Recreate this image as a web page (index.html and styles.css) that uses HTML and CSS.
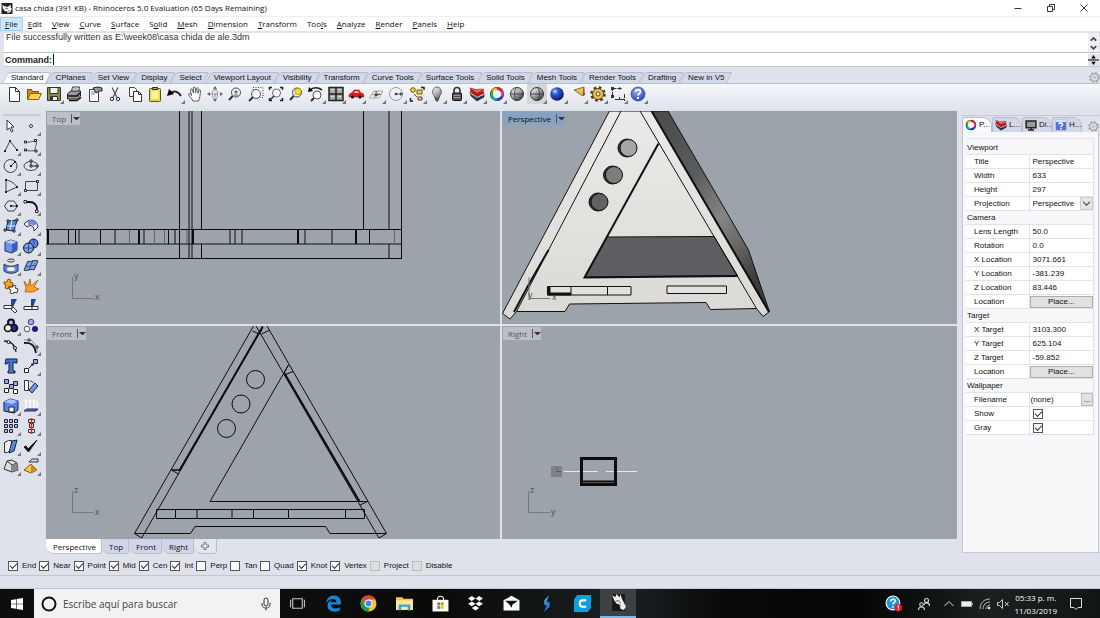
FILE: index.html
```html
<!DOCTYPE html>
<html lang="en">
<head>
<meta charset="utf-8">
<title>casa chida - Rhinoceros 5.0</title>
<link rel="stylesheet" href="styles.css">
</head>
<body>
<svg class="defs" aria-hidden="true">
  <defs>
    <linearGradient id="ball" x1="0" y1="0" x2="0.8" y2="1"><stop offset="0" stop-color="#fff"/><stop offset="0.5" stop-color="#aaa"/><stop offset="1" stop-color="#333"/></linearGradient>
    <radialGradient id="blueball" cx="0.35" cy="0.3" r="0.75"><stop offset="0" stop-color="#cfe0ff"/><stop offset="0.3" stop-color="#2f5fd8"/><stop offset="1" stop-color="#04136a"/></radialGradient>
    <radialGradient id="helpball" cx="0.4" cy="0.3" r="0.8"><stop offset="0" stop-color="#8fa8f4"/><stop offset="1" stop-color="#2440b8"/></radialGradient>
    <linearGradient id="side" x1="0" y1="0" x2="0.6" y2="1"><stop offset="0" stop-color="#48494b"/><stop offset="0.4" stop-color="#5b5c5e"/><stop offset="0.65" stop-color="#858585"/><stop offset="0.8" stop-color="#6c6a67"/><stop offset="1" stop-color="#3c3c3c"/></linearGradient>
    <linearGradient id="face" x1="0" y1="0" x2="0" y2="1"><stop offset="0" stop-color="#ebeae8"/><stop offset="1" stop-color="#dad9d6"/></linearGradient>
    <symbol id="wheel" viewBox="0 0 16 16"><circle cx="8" cy="8" r="7" fill="#222"/><g fill="none" stroke-width="3"><path stroke="#e22" d="M8 3a5 5 0 0 1 4.300 2.500"/><path stroke="#e3c" d="M12.300 5.500a5 5 0 0 1 0 5"/><path stroke="#33d" d="M12.300 10.500a5 5 0 0 1-4.300 2.500"/><path stroke="#0bc" d="M8 13a5 5 0 0 1-4.300-2.500"/><path stroke="#2b3" d="M3.700 10.500a5 5 0 0 1 0-5"/><path stroke="#eb1" d="M3.700 5.500a5 5 0 0 1 4.300-2.500"/></g><circle cx="8" cy="8" r="4" fill="#fff"/></symbol>
    <symbol id="layers" viewBox="0 0 16 16"><path fill="#24345f" stroke="#111" stroke-width=".6" d="M1 6l1 4 6 5 7-4V8l-7 3z"/><path fill="#f4f4f4" stroke="#333" stroke-width=".5" d="M1 4.500l.500 3.500 6.500 4 7-3V7l-7 3z"/><path fill="#c01818" d="M1 2l7 5 6.500-3 .500 3.500-7 3.500-6-4z"/><path fill="#f4704a" stroke="#511" stroke-width=".5" d="M1 2l6 1.500L14.500 3v1L8 7z"/></symbol>
    <symbol id="cog" viewBox="0 0 16 16"><circle cx="8" cy="8" r="5.500" fill="none" stroke="#999" stroke-width="1.600"/><circle cx="8" cy="8" r="7" fill="none" stroke="#999" stroke-width="1.600" stroke-dasharray="2.750 2.750"/><circle cx="8" cy="8" r="1.700" fill="none" stroke="#999"/></symbol>
    <symbol id="rhino" viewBox="0 0 16 16"><rect width="16" height="16" fill="#222"/><path fill="#fff" d="M1 2l3 3 2-1 1 2 3-1 4-3-1 4 2 2-2 5-4 2-1-3-3 0-3-4z"/><path d="M5 7l3 2 2-2M9 12l3-1" stroke="#222" fill="none"/></symbol>
    <symbol id="lens" viewBox="0 0 16 16"><circle cx="9" cy="6.500" r="4.500" fill="#f7f7f7" fill-opacity=".7" stroke="#444"/><path d="M5.700 10L2 14" stroke="#333" stroke-width="2"/></symbol>
  </defs>
</svg>

<header class="titlebar">
  <svg class="app-icon"><use href="#rhino"/></svg>
  <h1 class="title">casa chida (391 KB) - Rhinoceros 5.0 Evaluation (65 Days Remaining)</h1>
  <div class="window-buttons">
    <button aria-label="Minimize"><svg viewBox="0 0 10 10"><path d="M1.500 5.500h7"/></svg></button>
    <button aria-label="Restore"><svg viewBox="0 0 10 10"><path d="M1.500 3.500h5v5h-5zM3.500 3.500v-2h5v5h-2"/></svg></button>
    <button aria-label="Close"><svg viewBox="0 0 10 10"><path d="M1.500 1.500l7 7M8.500 1.500l-7 7"/></svg></button>
  </div>
</header>

<nav class="menubar">
  <button class="open"><u>F</u>ile</button><button><u>E</u>dit</button><button><u>V</u>iew</button><button><u>C</u>urve</button><button><u>S</u>urface</button><button>S<u>o</u>lid</button><button><u>M</u>esh</button><button><u>D</u>imension</button><button><u>T</u>ransform</button><button>Too<u>l</u>s</button><button><u>A</u>nalyze</button><button><u>R</u>ender</button><button><u>P</u>anels</button><button><u>H</u>elp</button>
</nav>

<section class="command">
  <div class="history">
    <p>File successfully written as E:\week08\casa chida de ale.3dm</p>
    <div class="scroller"><svg viewBox="0 0 10 18"><path d="M2.500 7L5 4.500 7.500 7M2.500 12L5 14.500 7.500 12"/></svg></div>
  </div>
  <div class="prompt">
    <label for="cmd">Command:</label><span class="caret"></span><input id="cmd" type="text">
    <div class="spinner"><svg viewBox="0 0 10 11"><path d="M5 1l2 3H3zM5 10l2-3H3zM0 5h10v1H0z"/></svg></div>
  </div>
</section>

<section class="tabstrip">
  <button class="active">Standard</button><button>CPlanes</button><button>Set View</button><button>Display</button><button>Select</button><button>Viewport Layout</button><button>Visibility</button><button>Transform</button><button>Curve Tools</button><button>Surface Tools</button><button>Solid Tools</button><button>Mesh Tools</button><button>Render Tools</button><button>Drafting</button><button>New in V5</button>
  <svg class="cog"><use href="#cog"/></svg>
</section>

<section class="toolbar">
  <div class="tools">
    <button aria-label="New"><svg viewBox="0 0 16 16"><path fill="#fff" stroke="#333" d="M3.500 1.500h6l4 4v10h-10zM9.500 1.500v4h4"/></svg></button>
    <button aria-label="Open"><svg viewBox="0 0 16 16"><path fill="#c98f12" stroke="#7a5200" d="M1.500 13.500v-10h4l1 2h6v3"/><path fill="#ffd257" stroke="#8a6000" d="M1.500 13.500l3-6h11l-3 6z"/></svg></button>
    <button class="more" aria-label="Save"><svg viewBox="0 0 16 16"><path fill="#8b8f40" stroke="#333" d="M1.500 1.500h13v13h-13z"/><path fill="#f4f4f4" stroke="#333" d="M4 1.500h8v6H4zM4.500 10.500h7v4h-7z"/><path d="M6 11v3" stroke="#333" stroke-width="2"/></svg></button>
    <button aria-label="Print"><svg viewBox="0 0 16 16"><path fill="#fff" stroke="#333" d="M5.500 6l1-5h7l-1 5"/><path fill="#999" stroke="#222" d="M1.500 8l3-3h10v5l-3 3h-10z"/><path d="M2 10h9l3-3M3 14.500h8l4-3" stroke="#111" fill="none" stroke-width="1.500"/><path d="M7.500 3h4" stroke="#777"/></svg></button>
    <button aria-label="Document properties"><svg viewBox="0 0 16 16"><path fill="#fff" stroke="#444" d="M2.500 3.500h9v12h-9z"/><path d="M4 6h5M4 8h4" stroke="#888"/><path fill="#999" stroke="#222" d="M6 2l5-1 4 1v3h-3l-3 2z"/></svg></button>
    <button aria-label="Cut"><svg viewBox="0 0 16 16"><path d="M5 1.500l5 10M11 1.500l-5 10" stroke="#555" stroke-width="1.300"/><circle cx="5" cy="13" r="1.700" fill="none" stroke="#333"/><circle cx="11" cy="13" r="1.700" fill="none" stroke="#333"/></svg></button>
    <button aria-label="Copy"><svg viewBox="0 0 16 16"><path fill="#fff" stroke="#444" d="M2.500 1.500h5l2 2v7h-7z"/><path fill="#fff" stroke="#333" d="M6.500 5.500h5l3 3v7h-8zM11.500 5.500v3h3"/></svg></button>
    <button aria-label="Paste"><svg viewBox="0 0 16 16"><rect x="2.500" y="2.500" width="11" height="13" rx="1" fill="#efd848" stroke="#5d5210"/><path d="M4.500 5h7v8h-7z" fill="#fff0a0"/><path fill="#aaa" stroke="#333" d="M5.500 1.500h5v2h-5z"/></svg></button>
    <button class="more" aria-label="Undo"><svg viewBox="0 0 16 16"><path d="M3 8c3-4 8-3 11 2" fill="none" stroke="#222" stroke-width="2"/><path d="M0 10l2-7 5 5z"/></svg></button>
    <button aria-label="Pan"><svg viewBox="0 0 16 16"><path d="M6 15c-1-3-4-4-4.500-7 1-1 2 0 3 1.500L3.500 4c0-1.500 1.500-1.500 2 0l1 3-.3-5c.3-1.300 1.800-1.200 2 0l.5 4.500.8-4c.4-1.200 1.800-.8 1.700.3l-.3 4.500 1-3c.6-1 1.800-.5 1.600.6C13 9 13 12 11.500 15z" fill="#fff" stroke="#333" stroke-width=".8"/></svg></button>
    <button aria-label="Rotate view"><svg viewBox="0 0 16 16"><path d="M8 1v14M1 8h14" stroke="#888" stroke-dasharray="4 2"/><path d="M8 0l2 3H6zM8 16l2-3H6zM0 8l3-2v4zM16 8l-3-2v4z" fill="#666"/><ellipse cx="8" cy="8" rx="2.500" ry="5" fill="none" stroke="#999"/></svg></button>
    <button aria-label="Zoom dynamic"><svg viewBox="0 0 16 16"><use href="#lens"/><path d="M7 6h4M9 4v4M7 9h4" stroke="#333" stroke-width=".8"/></svg></button>
    <button aria-label="Zoom window"><svg viewBox="0 0 16 16"><path d="M5 1.500h10v10H5z" fill="none" stroke="#444" stroke-dasharray="1 1.500"/><circle cx="8" cy="8" r="4.500" fill="#fff" fill-opacity=".7" stroke="#555"/><path d="M5 11l-4 4" stroke="#333" stroke-width="2"/></svg></button>
    <button aria-label="Zoom extents"><svg viewBox="0 0 16 16"><path d="M1.500 4V1.500H4M12 1.500h2.500V4M14.500 12v2.500H12M4 14.500H1.500V12" fill="none" stroke="#222" stroke-width="1.500"/><circle cx="8.500" cy="7" r="4" fill="#fff" stroke="#666"/><path d="M6 10l-4 4" stroke="#333" stroke-width="1.600"/></svg></button>
    <button aria-label="Zoom selected"><svg viewBox="0 0 16 16"><use href="#lens"/><circle cx="10" cy="5.500" r="3.200" fill="#ffdf28" stroke="#8b7a00" stroke-width=".6"/></svg></button>
    <button class="more" aria-label="Undo view change"><svg viewBox="0 0 16 16"><circle cx="9" cy="9" r="4" fill="#fff" stroke="#555"/><path d="M6 12l-3 3" stroke="#333" stroke-width="2"/><path d="M2 4c3-3 8-3 12 0" fill="none" stroke="#222" stroke-width="1.700"/><path d="M0 6l1-5 4 4z"/></svg></button>
    <button class="more" aria-label="Four viewports"><svg viewBox="0 0 16 16"><path d="M1 1.500h14v13H1z" fill="#aaa" stroke="#222" stroke-width="1.500"/><path d="M8 1v14M1 8h14" stroke="#222" stroke-width="1.500"/><path d="M3 3h3v1H3zM10 3h3v1h-3zM3 10h3v1H3zM10 10h3v1h-3z" fill="#ddd"/></svg></button>
    <button class="more" aria-label="Right view"><svg viewBox="0 0 16 16"><path d="M1 10c0-2 1-3 3-3l2-3h5l2 3c2 0 3 1 3 3v1H1z" fill="#e01c1c" stroke="#7c0707" stroke-width=".5"/><path d="M6 7l1-2h3l1 2z" fill="#fbb"/><circle cx="4.500" cy="11" r="1.500"/><circle cx="12" cy="11" r="1.500"/></svg></button>
    <button class="more" aria-label="Set CPlane"><svg viewBox="0 0 16 16"><path d="M1 12l5-7h9l-4 7zM3.500 8.500h10M6 12l4-7" fill="#eee" stroke="#aaa"/><path d="M8 9l4-1" stroke="#a33" stroke-width="1.500"/><path d="M8 9V5" stroke="#373"/><circle cx="8" cy="9" r="1.500" fill="#444"/></svg></button>
    <button class="more" aria-label="Object snap"><svg viewBox="0 0 16 16"><circle cx="8" cy="8" r="6.500" fill="none" stroke="#999"/><path d="M8 8h7" stroke="#555"/><circle cx="8" cy="8" r="1.300" fill="#444"/><path d="M12 6l3 2-3 2z" fill="#555"/></svg></button>
    <button class="more" aria-label="Select all"><svg viewBox="0 0 16 16"><path d="M12 1.500h3V4M1.500 12v3H4" fill="none" stroke="#222" stroke-width="1.500"/><circle cx="4" cy="4" r="2.300" fill="#f5d43a" stroke="#6b5800"/><path d="M8 4h5v4H8z" fill="#f5d43a" stroke="#6b5800"/><path d="M5 8l3 3M9 11h4v3H9z" fill="#eca" stroke="#633"/></svg></button>
    <button class="more" aria-label="Hide objects"><svg viewBox="0 0 16 16"><path d="M5.500 10c-4-4-1-9 2.500-9s6.500 5 2.500 9v2h-5z" fill="url(#ball)" fill-opacity=".7" stroke="#666"/><path d="M6 12h4v2l-2 2-2-2z" fill="#555"/></svg></button>
    <button class="more" aria-label="Lock objects"><svg viewBox="0 0 16 16"><path d="M5 8V4.500c0-4 6-4 6 0V8" fill="none" stroke="#333" stroke-width="1.600"/><rect x="3.500" y="7" width="9" height="7.500" rx="1" fill="#555" stroke="#111"/><path d="M4.500 9.500h7M4.500 11.500h7" stroke="#999"/></svg></button>
    <button class="more" aria-label="Edit layers"><svg><use href="#layers"/></svg></button>
    <button class="more" aria-label="Properties"><svg><use href="#wheel"/></svg></button>
    <button aria-label="Shaded"><svg viewBox="0 0 16 16"><circle cx="8" cy="8" r="6.500" fill="url(#ball)" stroke="#333"/><path d="M2 8h12M7 2c-2 4-2 8 0 12" fill="none" stroke="#333" stroke-width=".8"/></svg></button>
    <button class="more pressed" aria-label="Rendered"><svg viewBox="0 0 16 16"><circle cx="8" cy="8" r="6.500" fill="url(#ball)" stroke="#333"/><path d="M2 8h12M9 2c2 4 2 8 0 12" fill="none" stroke="#333" stroke-width=".8"/></svg></button>
    <button class="more" aria-label="Render"><svg viewBox="0 0 16 16"><circle cx="8" cy="8" r="6.800" fill="url(#blueball)"/></svg></button>
    <button class="more shift" aria-label="Spotlight"><svg viewBox="0 0 16 16"><path d="M2 4l10-3-1 9z" fill="#f6c04a" stroke="#555" stroke-width=".8"/><path d="M12 1l1 8-2 1z" fill="#7a4d12"/></svg></button>
    <button class="more" aria-label="Options"><svg viewBox="0 0 16 16"><circle cx="8" cy="8" r="6.300" fill="none" stroke="#4c3a10" stroke-width="3" stroke-dasharray="2.475"/><circle cx="8" cy="8" r="5.500" fill="#e9bf55" stroke="#5a4310"/><circle cx="8" cy="8" r="2" fill="#fff" stroke="#5a4310"/></svg></button>
    <button class="more" aria-label="Dimension"><svg viewBox="0 0 16 16"><path d="M2.500 1v11M2.500 2.500h9M5 13.500h9M14.500 8v7M9.500 11v3" fill="none" stroke="#333" stroke-dasharray="4 1"/><path d="M1 1h3v3H1zM1 9h3v3H1zM9 1l3 1.500L9 4z" fill="#333"/></svg></button>
    <button class="more" aria-label="Help"><svg viewBox="0 0 16 16"><circle cx="8" cy="8" r="7" fill="url(#helpball)" stroke="#1c2d7a" stroke-width=".6"/><path d="M5.500 6c0-3.500 5.500-3 5 0-.3 1.500-2.500 1.500-2.500 3.500M8 11v2" fill="none" stroke="#fff" stroke-width="1.800"/></svg></button>
  </div>
</section>

<main class="workspace">
  <aside class="sidebar">
    <button aria-label="Select"><svg viewBox="0 0 16 16"><path d="M4 2l7 7H8l2 4-1.500 1L6.500 10 4 12z" fill="#fff" stroke="#333"/></svg></button>
    <button class="more" aria-label="Point"><svg viewBox="0 0 16 16"><circle cx="8" cy="8" r="1.500" fill="#fff" stroke="#333"/></svg></button>
    <button class="more" aria-label="Polyline"><svg viewBox="0 0 16 16"><path d="M2 13L7 3l7 9" fill="none" stroke="#444"/><path d="M1 12h2v2H1zM6 2h2v2H6zM13 11h2v2h-2z" fill="#222"/></svg></button>
    <button class="more" aria-label="Curve"><svg viewBox="0 0 16 16"><path d="M3 4c3 1 8-2 10 0 2 3-3 5 0 9M3 12c3 2 8 0 10 1" fill="none" stroke="#555"/><path d="M1.500 3h2v2h-2zM11.500 1.500h2v2h-2zM1.500 11h2v2h-2zM12 12h2v2h-2z" fill="#fff" stroke="#222"/></svg></button>
    <button class="more" aria-label="Circle"><svg viewBox="0 0 16 16"><circle cx="7.500" cy="8" r="6.500" fill="none" stroke="#444"/><path d="M8 8l4-4" stroke="#333"/><path d="M7 7h2v2H7zM11 3h2v2h-2z" fill="#222"/></svg></button>
    <button class="more" aria-label="Ellipse"><svg viewBox="0 0 16 16"><ellipse cx="8" cy="8" rx="7" ry="4.500" fill="none" stroke="#444"/><path d="M8 3v5h6" fill="none" stroke="#333"/><path d="M7 2h2v2H7zM7 7h2v2H7zM13 7h2v2h-2z" fill="#fff" stroke="#222"/></svg></button>
    <button class="more" aria-label="Arc"><svg viewBox="0 0 16 16"><path d="M3 14V2c6 1 9 4 11 7z" fill="none" stroke="#444"/><path d="M2 1h2v2H2zM2 13h2v2H2zM13 8h2v2h-2z" fill="#222"/></svg></button>
    <button class="more" aria-label="Rectangle"><svg viewBox="0 0 16 16"><path d="M2.500 3.500h12v9h-12z" fill="none" stroke="#444"/><path d="M1.500 11.500h2v2h-2zM13.500 2.500h2v2h-2z" fill="#fff" stroke="#222"/></svg></button>
    <button class="more" aria-label="Polygon"><svg viewBox="0 0 16 16"><path d="M5 3h6l3.500 5L11 13H5L1.500 8z" fill="none" stroke="#444"/><path d="M8 8h6" stroke="#222"/><path d="M7 7h2v2H7zM13 7h2v2h-2z" fill="#222"/></svg></button>
    <button class="more" aria-label="Fillet"><svg viewBox="0 0 16 16"><path d="M2 4h5c4 0 7 3 7 7v3" fill="none" stroke="#111" stroke-width="1.800"/><path d="M1 2.500h2.500V5H1zM12.500 12H15v2.500h-2.500z" fill="#fff" stroke="#222"/></svg></button>
    <button class="more" aria-label="Surface from points"><svg viewBox="0 0 16 16"><path d="M5 3l9-1-3 11-8-1z" fill="#5b83dc" stroke="#123"/><path d="M9 2L7 12M4 8h9" stroke="#cfe"/><path d="M4 2h2v2H4zM13 1h2v2h-2zM10 12h2v2h-2zM1 11h2v2H1z" fill="#fff" stroke="#222"/></svg></button>
    <button class="more" aria-label="Surface"><svg viewBox="0 0 16 16"><path d="M1 6c5-6 13-5 14 3l-4 4c0-5-3-7-7-4z" fill="#f4f7ff" stroke="#333"/><path d="M5 3c4-2 8 0 9 3l-4 2c-1-2-3-2-5 0z" fill="#6e90de"/></svg></button>
    <button class="more" aria-label="Box"><svg viewBox="0 0 16 16"><path d="M2 4l6-2 6 2v8l-5 3-7-2z" fill="#6a92f0" stroke="#234"/><path d="M2 4l7 2 5-2-6-2z" fill="#b5cbff"/><path d="M9 6v9l5-3V4z" fill="#3a5cbc"/></svg></button>
    <button class="more" aria-label="Boolean union"><svg viewBox="0 0 16 16"><circle cx="10.500" cy="5.500" r="4.500" fill="#5b83df" stroke="#112"/><circle cx="5.500" cy="10" r="5" fill="#7c9ff0" stroke="#112"/><path d="M1 10h9M5.500 5v10M11 1v5" stroke="#235" stroke-width=".7"/></svg></button>
    <button class="more" aria-label="Surface curves"><svg viewBox="0 0 16 16"><ellipse cx="8" cy="2.500" rx="3.500" ry="1.500" fill="none" stroke="#333"/><path d="M1 6c4 3 10 3 14 0v7c-4 3-10 3-14 0z" fill="#5e87e4" stroke="#234"/><ellipse cx="8" cy="11" rx="4" ry="2" fill="#eef3ff"/></svg></button>
    <button class="more" aria-label="Surface patch"><svg viewBox="0 0 16 16"><path d="M5 3c3 2 6-2 10 0l-4 9c-4-2-7 2-10 0z" fill="#7a9cec" stroke="#234"/><path d="M10 2L6 12M3 8c3 2 6-2 10 0" fill="none" stroke="#235" stroke-width=".7"/></svg></button>
    <button aria-label="Join"><svg viewBox="0 0 16 16"><path d="M1 4l3 0 1-3 3 1-1 2 3 1-1 4-3-1-1 3-3-1 1-3-2-1z" fill="#f6ac22" stroke="#8a5200"/><path d="M7 9l3 0 0-2 3 1-1 2 3 1-1 4-3-1-1 2-3-1 1-3-2-1z" fill="#fff" stroke="#444"/></svg></button>
    <button aria-label="Explode"><svg viewBox="0 0 16 16"><path d="M1 3l4 5 2-7 1 7 7-6-4 7 5 2-6 3H2l1-4z" fill="#f9a12a" stroke="#9a5000" stroke-width=".7"/></svg></button>
    <button aria-label="Trim"><svg viewBox="0 0 16 16"><path d="M8 1h6l-4 8H8z" fill="#214794"/><path d="M1 7.500h8v3H1zM10 9l4 4-2 2-4-4z" fill="#fff" stroke="#333"/></svg></button>
    <button aria-label="Split"><svg viewBox="0 0 16 16"><path d="M8 1h5l-3 8H8z" fill="#214794"/><path d="M1 8.500h14v3H1zM9 8v4" fill="#fff" stroke="#333"/></svg></button>
    <button class="more" aria-label="Group"><svg viewBox="0 0 16 16"><circle cx="8" cy="4.500" r="3" fill="#9fb6ff" stroke="#111" stroke-width="2"/><circle cx="11" cy="10" r="3.500" fill="#1d2c86" stroke="#111" stroke-width="1.600"/><circle cx="5" cy="10" r="3.500" fill="#fff" stroke="#111" stroke-width="1.600"/></svg></button>
    <button aria-label="Ungroup"><svg viewBox="0 0 16 16"><circle cx="8" cy="4" r="2.800" fill="#9fa6ef" stroke="#446"/><circle cx="4" cy="11" r="2.800" fill="#fff" stroke="#555"/><circle cx="12" cy="11" r="3" fill="#1d2080"/></svg></button>
    <button aria-label="Edit points"><svg viewBox="0 0 16 16"><path d="M1 3c7 0 11 4 12 11" fill="none" stroke="#222" stroke-width="1.300"/><circle cx="5.500" cy="4" r="1.500" fill="#fff" stroke="#111"/><circle cx="12" cy="10" r="1.500" fill="#fff" stroke="#111"/></svg></button>
    <button class="more" aria-label="Control points"><svg viewBox="0 0 16 16"><path d="M1 5c7-1 11 3 12 10" fill="none" stroke="#111" stroke-width="1.800"/><path d="M1 2h7l6 7v5" fill="none" stroke="#888"/><path d="M5 1h2v2H5zM13 8h2v2h-2z" fill="#fff" stroke="#333"/></svg></button>
    <button aria-label="Text object"><svg viewBox="0 0 16 16"><path d="M3 1h11v4h-2l-1-1h-1v9h2v2H5v-2h1V4H5L4 6H2z" fill="#4678dc" stroke="#123"/></svg></button>
    <button class="more" aria-label="Move"><svg viewBox="0 0 16 16"><path d="M10.500 1.500h4v4h-4z" fill="#8eafff" stroke="#222"/><path d="M1.500 10.500h4v4h-4z" fill="#fff" stroke="#222"/><path d="M6 10l4-4M8 6h2v2" stroke="#111" fill="none"/></svg></button>
    <button aria-label="Copy objects"><svg viewBox="0 0 16 16"><g fill="#8aaaf2" stroke="#222"><path d="M1.500 1.500h4v4h-4zM10.500 3.500h4v4h-4zM6.500 6.500h4v4h-4z"/><path fill="#fff" d="M1.500 10.500h4v4h-4zM10.500 11.500h4v4h-4z"/></g></svg></button>
    <button aria-label="Rotate"><svg viewBox="0 0 16 16"><path d="M1.500 2.500h4v10h-4z" fill="#fff" stroke="#333"/><path d="M12 5l3 3-6 7-3-3z" fill="#7398ea" stroke="#223"/><path d="M7 3c2 0 3 1 3 2" fill="none" stroke="#333"/></svg></button>
    <button class="more" aria-label="Boolean"><svg viewBox="0 0 16 16"><path d="M1 4l6-3 8 2v9l-4 3-10-2z" fill="#5785ea" stroke="#123"/><path d="M1 4l8 2 6-3-8-2z" fill="#a9c3ff"/><path d="M6 9h5v5H6z" fill="#fff" stroke="#222"/></svg></button>
    <button class="more" aria-label="Project"><svg viewBox="0 0 16 16"><path d="M3 10V3M7 10V3M11 10V3M14 10V3M2 4l1-2 1 2M6 4l1-2 1 2M10 4l1-2 1 2" stroke="#fff" stroke-width="1.400" fill="none"/><path d="M1 13l3-2h11l-2 2z" fill="#4d79d8" stroke="#235"/></svg></button>
    <button class="more" aria-label="Array"><svg viewBox="0 0 16 16"><path d="M1.500 1.500h3v3h-3zM6.500 1.500h3v3h-3zM11.500 1.500h3v3h-3zM1.500 6.500h3v3h-3zM6.500 6.500h3v3h-3zM11.500 6.500h3v3h-3zM1.500 11.500h3v3h-3zM6.500 11.500h3v3h-3z" fill="#a9c0ff" stroke="#223"/></svg></button>
    <button class="more" aria-label="Align"><svg viewBox="0 0 16 16"><path d="M5.500 1.500h6v3h-6zM6.500 5.500h4v4h-4zM5.500 11.500h6v3h-6z" fill="#eee" stroke="#333"/><path d="M8.500 0v16" stroke="#e12323" stroke-width="1.500"/></svg></button>
    <button class="more" aria-label="Shear"><svg viewBox="0 0 16 16"><path d="M1.500 4.500l4-2h3v9l-4 3h-3z" fill="#eee" stroke="#333"/><path d="M9 3l5-1-3 11-5 2z" fill="#5d88e6" stroke="#123"/></svg></button>
    <button class="more" aria-label="Check"><svg viewBox="0 0 16 16"><path d="M1 9l2-1 2 3 9-9-8.500 12z" fill="#111" stroke="#111"/></svg></button>
    <button class="more" aria-label="Mesh"><svg viewBox="0 0 16 16"><path d="M1 11l3-8 5-1 5 3 1 7-6 2z" fill="#ddd" stroke="#333"/><path d="M4 3l5 4v7M9 7l5-2" fill="none" stroke="#333"/><path d="M9 7l5-2 1 7-6 2z" fill="#888"/></svg></button>
    <button class="more" aria-label="Render tools"><svg viewBox="0 0 16 16"><path d="M1 12l7-6 6 6-6 3z" fill="#f8c458" stroke="#85560c"/><path d="M8 6v9l6-3z" fill="#d08c24"/><path d="M6 4l3-3h6v3H9z" fill="#ddd" stroke="#333"/></svg></button>
  </aside>

  <section class="views">
    <div class="viewports">
      <div class="viewport">
        <svg class="scene"><g transform="translate(-46 -111)" class="wire">
          <path d="M46 229.500H402M46 244H402M46 258.500H402"/>
          <path d="M179.500 111V258M189 111V258M192 111V258M201.500 111V229M201.500 244V258M363.500 111V229M389 111V229M389 244V258M401.500 111V259"/>
          <path class="thick" d="M48 229v15M193 229v15M139 229v15M356 229v15M298 229v15"/>
          <path d="M68.500 229v15M75.500 229v15M79 229v15M100.500 229v15M115 229v15M144 229v15M168.500 229v15M175 229v15M230 229v15M235 229v15M242 229v15M305 229v15M332 229v15M369.500 229v15"/>
          <path class="faint" d="M129.500 230v14M154.500 230v14M164.500 230v14M187 230v14M394.500 230v14"/>
          <path class="axis" d="M72.500 277v21.500H94"/><text x="74" y="279">y</text><text x="95" y="300">x</text>
        </g></svg>
        <div class="vlabel"><span>Top</span><i></i></div>
      </div>
      <div class="viewport">
        <svg class="scene"><g transform="translate(-502 -111)" class="solid">
          <path d="M651 111H668L748.500 250 769.500 312z" fill="url(#side)"/>
          <path d="M609.500 111L502.500 313.500 510 319 516.500 311.500H565L569.500 304 706 302.500 710.500 309.500 756.500 308.500 763 316.500 769.500 311.500 651.500 111z" fill="url(#face)"/>
          <path d="M607 237L714 236.500 737.500 275.500 585 277z" fill="#5d5e61"/>
          <path d="M621 111L516.500 311.500M640 111L756.500 308.500"/>
          <path class="thick" d="M658.500 143.500L584.500 277.500 737.500 276M651.500 111L769 312"/>
          <path class="thick" d="M548.500 250L529 284 514 312"/>
          <g fill="#333"><circle cx="627" cy="148" r="9"/><circle cx="612.500" cy="175" r="9"/><circle cx="598" cy="202" r="9"/></g>
          <circle cx="628.500" cy="148" r="8.500" fill="#a6a6a5"/><circle cx="614" cy="175" r="8.500" fill="#7e7d7c"/><circle cx="599.500" cy="202" r="8.500" fill="#626262"/>
          <path d="M547.500 286.500H631V295H547.500zM571 286.500V295M607.500 286.500V295M667 286H726.500V293.500H667z" fill="#e2e1df"/>
          <path d="M549 286.500V294H571" stroke-width="3"/>
          <path class="axis" d="M529 277v21.500H550"/><text x="528" y="298">y</text><text x="552" y="300">x</text>
        </g></svg>
        <div class="vlabel current"><span>Perspective</span><i></i></div>
      </div>
      <div class="viewport">
        <svg class="scene"><g transform="translate(-46 -326)" class="wire">
          <path d="M253.500 326L134.500 533.500 141.700 538 263 326M267 326L386.500 533.500 379 538 256 326"/>
          <path class="thick" d="M262.500 327L179.500 470.500M284 372.500L359.500 501.500"/>
          <path d="M288.500 365L210 501.500H367.500M284 375L293 371.500M171.500 470H180L171.500 470 178.500 474M360 505L367.500 501.500M252.500 331L259 334 262 330M261.500 334L269 330.500M284 372.500L288.500 365"/>
          <path d="M156.500 509.500H364.500V518.500H156.500zM175.500 509v9M197 509v9M232 509v9M253.500 509v9M288.500 509v9M345.500 509v9"/>
          <path d="M134.500 533.500H190.500L195 526.500H325.500L330 533.500H386"/>
          <circle cx="255.500" cy="379.500" r="9"/><circle cx="241" cy="404" r="9"/><circle cx="226.500" cy="428.500" r="9"/>
          <path class="axis" d="M72.500 491v21.500H94"/><text x="74" y="493">z</text><text x="95" y="515">x</text>
        </g></svg>
        <div class="vlabel"><span>Front</span><i></i></div>
      </div>
      <div class="viewport">
        <svg class="scene"><g transform="translate(-502 -326)" class="wire">
          <rect x="551" y="466" width="11" height="11" fill="#7d8288" stroke="none"/>
          <path d="M556.500 467v4" stroke="#2a9a2a"/><path d="M556 471.500h5" stroke="#b33"/>
          <path d="M564 471.500h34M606 471.500h31" stroke="#e6e8eb"/>
          <rect x="581.500" y="458.500" width="34" height="26" stroke-width="3"/><path d="M581 481.500h35" stroke-width="2"/>
          <path class="axis" d="M528.500 491v21.500H550"/><text x="530" y="493">z</text><text x="551" y="515">y</text>
        </g></svg>
        <div class="vlabel"><span>Right</span><i></i></div>
      </div>
    </div>
    <nav class="view-tabs"><button class="active">Perspective</button><button>Top</button><button>Front</button><button>Right</button><button class="add" aria-label="New viewport"><svg viewBox="0 0 8 8"><path d="M3 .5h2V3h2.500v2H5v2.500H3V5H.5V3H3z" fill="#fff" stroke="#777"/></svg></button></nav>
  </section>

  <aside class="panel">
    <nav class="panel-tabs">
      <button class="active"><svg><use href="#wheel"/></svg>P...</button>
      <button><svg><use href="#layers"/></svg>L...</button>
      <button><svg viewBox="0 0 16 16"><path d="M1.500 2.500h13v9h-13z" fill="#9a9a9a" stroke="#222" stroke-width="2"/><path d="M4 14.500h8M8 12v2" stroke="#222" stroke-width="2"/></svg>Di...</button>
      <button><svg viewBox="0 0 16 16"><path d="M1 1h14v14H1z" fill="#5a72d4"/><path d="M1 1h14v3H1z" fill="#d8e0fc"/><path d="M5 7c1-3 6-2 5 1-1 1-2 1-2 3M8 12v2" fill="none" stroke="#fff" stroke-width="2"/></svg>H...</button>
      <svg class="cog"><use href="#cog"/></svg>
    </nav>
    <div class="panel-body">
      <table class="props">
        <tbody>
          <tr><th colspan="2">Viewport</th></tr>
          <tr><td>Title</td><td>Perspective</td></tr>
          <tr><td>Width</td><td>633</td></tr>
          <tr><td>Height</td><td>297</td></tr>
          <tr><td><label for="projection">Projection</label></td><td class="field"><div class="select"><select id="projection"><option>Perspective</option><option>Parallel</option></select><svg viewBox="0 0 8 8"><path d="M1 2.500l3 3 3-3"/></svg></div></td></tr>
        </tbody>
        <tbody>
          <tr><th colspan="2">Camera</th></tr>
          <tr><td>Lens Length</td><td>50.0</td></tr>
          <tr><td>Rotation</td><td>0.0</td></tr>
          <tr><td>X Location</td><td>3071.661</td></tr>
          <tr><td>Y Location</td><td>-381.239</td></tr>
          <tr><td>Z Location</td><td>83.446</td></tr>
          <tr><td>Location</td><td class="field"><button class="place">Place...</button></td></tr>
        </tbody>
        <tbody>
          <tr><th colspan="2">Target</th></tr>
          <tr><td>X Target</td><td>3103.300</td></tr>
          <tr><td>Y Target</td><td>625.104</td></tr>
          <tr><td>Z Target</td><td>-59.852</td></tr>
          <tr><td>Location</td><td class="field"><button class="place">Place...</button></td></tr>
        </tbody>
        <tbody>
          <tr><th colspan="2">Wallpaper</th></tr>
          <tr><td>Filename</td><td class="field"><div class="file"><span>(none)</span><button>...</button></div></td></tr>
          <tr><td><label for="show">Show</label></td><td><input id="show" type="checkbox" checked></td></tr>
          <tr><td><label for="gray">Gray</label></td><td><input id="gray" type="checkbox" checked></td></tr>
        </tbody>
      </table>
    </div>
  </aside>
</main>

<section class="osnap">
  <label><input type="checkbox" checked>End</label><label><input type="checkbox" checked>Near</label><label><input type="checkbox" checked>Point</label><label><input type="checkbox" checked>Mid</label><label><input type="checkbox" checked>Cen</label><label><input type="checkbox" checked>Int</label><label><input type="checkbox">Perp</label><label><input type="checkbox">Tan</label><label><input type="checkbox">Quad</label><label><input type="checkbox" checked>Knot</label><label><input type="checkbox" checked>Vertex</label><label><input type="checkbox" disabled>Project</label><label><input type="checkbox" disabled>Disable</label>
</section>
<div class="status"></div>

<footer class="taskbar">
  <button class="start" aria-label="Start"><svg viewBox="0 0 12 12"><path fill="#fff" d="M0 2l5-.8V5.700H0zM5.600 1L12 0v5.700H5.600zM0 6.300h5v4.500L0 10zM5.600 6.300H12V12l-6.400-1z"/></svg></button>
  <div class="search">
    <svg viewBox="0 0 16 16"><circle cx="8" cy="8" r="6.500" fill="none" stroke="#111" stroke-width="2"/></svg>
    <input type="text" aria-label="Buscar" placeholder="Escribe aquí para buscar">
    <svg class="mic" viewBox="0 0 12 16"><rect x="4" y="2" width="4" height="8" rx="2" fill="none" stroke="#333"/><path d="M2 7v2c0 4 8 4 8 0V7M6 12v2.500" fill="none" stroke="#333"/></svg>
  </div>
  <nav class="apps">
    <button aria-label="Task view"><svg viewBox="0 0 16 16"><path d="M3.500 3.500h9v9h-9zM1.500 4.500v7M14.500 4.500v7" fill="none" stroke="#ccc"/></svg></button>
    <button aria-label="Edge"><svg viewBox="0 0 16 16"><path fill="#1883df" d="M1 8C1.500 3 4.500.5 8.500.5 13 .5 15.500 4 15 9H5.500c.2 4 5 4.800 8.500 2.500v3C8 17.500 1.500 15 2.500 9 3 7 4.500 5.500 6 5c-.4.600-.6 1.200-.7 1.800h5.500C10.800 2.500 4 2.500 1 8z"/></svg></button>
    <button aria-label="Chrome"><svg viewBox="0 0 16 16"><circle cx="8" cy="8" r="7.500" fill="#f6c51d"/><path fill="#db4437" d="M1.500 4.300A7.500 7.500 0 0 1 14.500 4.300H8L5 9.500z"/><path fill="#1a9c57" d="M1.500 4.300L5 10l3 1.500 1.500 0L7.500 15.500A7.500 7.500 0 0 1 1.500 4.300z"/><circle cx="8" cy="8" r="3.700" fill="#fff"/><circle cx="8" cy="8" r="2.800" fill="#4285f4"/></svg></button>
    <button aria-label="File Explorer"><svg viewBox="0 0 16 16"><path fill="#f3c64f" d="M0 2h6l1 1.500h9V14H0z"/><path fill="#ffe79a" d="M0 5h16v9H0z"/><path fill="#3da2e0" d="M2.500 14.500V9h11v5.500H11V11H5v3.500z"/></svg></button>
    <button aria-label="Store"><svg viewBox="0 0 16 16"><path d="M5 5c0-5 6-5 6 0" fill="none" stroke="#fff"/><path fill="#fff" d="M.5 4.500h15v11H.5z"/><path fill="#e34f26" d="M5 7h2.700v2.700H5z"/><path fill="#7fba00" d="M8.300 7H11v2.700H8.300z"/><path fill="#00a4ef" d="M5 10.300h2.700V13H5z"/><path fill="#ffb900" d="M8.300 10.300H11V13H8.300z"/></svg></button>
    <button aria-label="Dropbox"><svg viewBox="0 0 16 16"><path fill="#fff" d="M4.500 1L8 3.300 4.500 5.600 1 3.300zM11.500 1L15 3.300 11.500 5.600 8 3.300zM4.500 6L8 8.300 4.500 10.600 1 8.300zM11.500 6L15 8.300 11.500 10.600 8 8.300zM8 10l3.500 2.300L8 14.600 4.500 12.300z"/></svg></button>
    <button aria-label="Mail"><svg viewBox="0 0 16 16"><path fill="#fff" d="M.5 5L8 .8 15.500 5v9.500H.5z"/><path d="M2 5.500h12L9 9l-1 3-2-3z" fill="#111"/></svg></button>
    <button aria-label="Slash"><svg viewBox="0 0 16 16"><path fill="#49b4f0" d="M10.500 0L6 5v4l3 1 0-2-1.500-1z"/><path fill="#2f7be0" d="M5.500 16L11 11V7L7 5.500V8l1.500 1.500z"/></svg></button>
    <button aria-label="Cura"><svg viewBox="0 0 16 16"><path fill="#0a9fe0" d="M3 0h13v12l-3 4H0V4z"/><path d="M11.500 5H8c-3.500 0-3.500 6 0 6h3.500" fill="none" stroke="#fff" stroke-width="2"/></svg></button>
    <button class="running" aria-label="Rhinoceros"><svg viewBox="0 0 16 16"><path fill="#181818" d="M2 0h12v16H2z"/><path fill="#eee" d="M2 1l2 5 2 3 3 1 1 4 3 1 2-3-2-4-2-4-1-4-1 3-3-3-1 3z"/><path d="M5 7l3-1 2 3M8 10l2 1" fill="none" stroke="#444" stroke-width=".8"/></svg></button>
  </nav>
  <div class="tray">
    <svg class="big" viewBox="0 0 16 16"><circle cx="7.500" cy="7.500" r="7" fill="#fff"/><circle cx="7.500" cy="7.500" r="6" fill="#2397d4"/><path d="M5.500 6c0-3 4.500-2.500 4 0-.3 1.300-2 1.300-2 3M7.500 10.500v1.500" fill="none" stroke="#fff" stroke-width="1.500"/><circle cx="12.500" cy="12" r="3.500" fill="#e01b2c"/><path d="M12.500 9.500v3M12.500 13v1" stroke="#fff"/></svg>
    <svg class="people" viewBox="0 0 14 14"><g fill="none" stroke="#ddd" stroke-width="1.100"><circle cx="9.500" cy="3.500" r="2"/><path d="M7 8c0-3 5.500-3 5.500 1"/><circle cx="4.500" cy="7.500" r="1.800"/><path d="M1.500 13c0-4 6-4 6 0"/></g></svg>
    <svg viewBox="0 0 12 12"><path d="M1.500 8L6 3.500 10.500 8" fill="none" stroke="#ddd"/></svg>
    <svg viewBox="0 0 12 12"><path d="M.5 3.500h10v5H.5z" fill="#eee" stroke="#aaa"/><path d="M11.500 5v2" stroke="#aaa"/></svg>
    <svg viewBox="0 0 12 12"><g fill="none" stroke="#bbb"><path d="M1 11C1 5 5 1 11 1M4 11c0-4 3-7 7-7M7 11c0-2 2-4 4-4"/></g><circle cx="10" cy="10" r="1.300" fill="#eee"/></svg>
    <svg viewBox="0 0 12 12"><path d="M.5 4.500h2l3-3v9l-3-3h-2zM8 4l3.500 4M11.500 4L8 8" fill="none" stroke="#ccc"/></svg>
    <time>05:33 p. m.<br>11/03/2019</time>
    <svg class="note" viewBox="0 0 14 14"><path d="M1.500 1.500h11v9H9L7 12.500 5 10.500H1.500z" fill="none" stroke="#ddd"/></svg>
  </div>
</footer>
</body>
</html>
```
FILE: styles.css
```css
* { box-sizing: border-box; }

body {
  margin: 0;
  min-height: 100vh;
  display: flex;
  flex-direction: column;
  background: #dfe2eb;
  color: #111;
  font: 8px/12px "Liberation Sans", Arial, sans-serif;
}

button, input, select { font: inherit; color: inherit; }
button { border: 0; padding: 0; background: none; }
svg { display: block; }
.defs { position: absolute; width: 0; height: 0; }

/* Title bar and menus */
.titlebar {
  display: flex;
  align-items: center;
  height: 16px;
  padding-left: 1px;
  background: #fff;
}
.app-icon { width: 12px; height: 11px; }
.title { flex: 1; margin: 0 0 0 2px; font: 8px/16px "Open Sans", sans-serif; }
.window-buttons { display: flex; }
.window-buttons button { width: 33px; display: grid; place-items: center; }
.window-buttons svg { width: 10px; height: 10px; fill: none; stroke: #333; }

.menubar {
  display: flex;
  height: 16px;
  background: #fff;
  border-top: 1px solid #eee;
  border-bottom: 1px solid #dfe2eb;
  font: 8px/14px "Open Sans", sans-serif;
}
.menubar button { padding: 0 5px; }
.menubar .open { background: #cce6fb; outline: 1px solid #9fcdf3; outline-offset: -1px; }

/* Command area */
.command { padding: 1px 1px 0 4px; }
.history, .prompt { display: flex; background: #fff; }
.history { height: 20px; border-bottom: 1px solid #b9bccd; }
.history p { flex: 1; margin: 0; padding-left: 2px; font-size: 9px; line-height: 9px; color: #333; }
.scroller { width: 11px; background: #f0f0f0; }
.scroller path { fill: none; stroke: #444; stroke-width: 1.5; }
.prompt { height: 14px; align-items: center; padding-left: 1px; border-bottom: 1px solid #c5c8d3; }
.prompt label { font-size: 9px; font-weight: 700; color: #222; }
.prompt input { flex: 1; min-width: 0; height: 11px; border: 0; padding: 0; outline: 0; }
.caret { width: 1px; height: 11px; margin-left: 1px; background: #111; }
.spinner { width: 11px; height: 12px; background: #e4e4e4; }

/* Toolbar tabs */
.tabstrip {
  display: flex;
  align-items: flex-end;
  height: 16px;
  margin-top: 1px;
  padding-left: 5px;
  border-bottom: 1px solid #b9bdcc;
}
.tabstrip button { position: relative; z-index: 0; height: 11px; padding: 0 6px; line-height: 12px; }
.tabstrip button::before {
  content: "";
  position: absolute;
  z-index: -1;
  inset: 0;
  border: 1px solid #b4b9ca;
  border-bottom: 0;
  border-radius: 3px 3px 0 0;
  background: #d3d8e8;
  transform: skewX(-28deg);
}
.tabstrip .active::before { background: #fafbfd; }
.cog { width: 11px; height: 11px; margin-left: auto; }

.toolbar { height: 27px; padding: 0 4px; background: linear-gradient(#f6f7fa, #dfe2eb); }
.tools { display: grid; grid-template-columns: repeat(32, 1fr); max-width: 644px; }
.tools button, .sidebar button { position: relative; height: 20px; display: grid; place-items: center; }
.tools svg { width: 16px; height: 16px; }
.more::after {
  content: "";
  position: absolute;
  right: 0;
  bottom: 0;
  border: 2px solid;
  border-color: transparent #777 #777 transparent;
}
.pressed { background: #d5d6da; }
.tools .shift { justify-items: end; }

/* Workspace */
.workspace { flex: 1; display: flex; }
.sidebar {
  display: grid;
  grid-template-columns: 20px 20px;
  align-content: start;
  width: 46px;
  padding: 5px 0 0 1px;
  background: #dfe2eb;
}
.sidebar::before { content: ""; grid-column: 1 / -1; height: 2px; margin: -2px 0 0 2px; background: #c8ccd8; }
.sidebar svg { width: 16px; height: 16px; }
.views { flex: 1; min-width: 0; display: flex; flex-direction: column; }
.viewports {
  flex: 1;
  display: grid;
  grid-template-columns: 454fr 455fr;
  grid-template-rows: 1fr 1fr;
  gap: 2px;
  background: #dfe2eb;
}
.viewport { position: relative; background: #9da3ab; overflow: hidden; }
.scene { position: absolute; width: 100%; height: 100%; }
.scene text { fill: #555; stroke: none; font: 9px "Liberation Sans", sans-serif; }
.wire { fill: none; stroke: #0c0c0c; }
.solid { stroke: #111; fill: none; }
.scene .thick { stroke-width: 2; }
.scene .faint { stroke: #60656c; stroke-width: 1; }
.scene .axis { stroke: #74797f; }
.vlabel {
  position: absolute;
  top: 1px;
  left: 1px;
  display: flex;
  height: 13px;
  padding-left: 5px;
  background: #bcc0c6;
  color: #555;
  font: 8px/13px "Open Sans", sans-serif;
}
.vlabel i { width: 9px; height: 9px; margin: 2px 0 0 5px; border-left: 1px solid #555; }
.vlabel i::after { content: ""; display: block; margin: 3px 0 0 1px; border: 3px solid transparent; border-top-color: #333; }
.vlabel.current { background: #87a3c4; color: #111; }

.view-tabs { display: flex; height: 17px; font: 8px/15px "Open Sans", sans-serif; }
.view-tabs button {
  height: 15px;
  padding: 0 5px 0 7px;
  background: #d0d6e8;
  border: solid #b9bdcc;
  border-width: 0 1px 1px 0;
  border-radius: 0 0 3px 8px;
}
.view-tabs .active { background: #fff; }
.view-tabs .add { background: #e3e6ee; padding: 0 7px; }
.add svg { width: 8px; height: 8px; }

/* Properties panel */
.panel { width: 143px; padding: 4px 1px 3px 5px; display: flex; flex-direction: column; }
.panel-tabs { display: flex; align-items: flex-end; height: 17px; border-top: 1px solid #c5c9d6; }
.panel-tabs button {
  display: flex;
  align-items: center;
  gap: 2px;
  width: 30px;
  height: 15px;
  padding-left: 2px;
  background: #d3d8e8;
  border: 1px solid #b9bdcc;
  border-bottom: 0;
  border-radius: 3px 9px 0 0;
}
.panel-tabs button svg { width: 12px; height: 12px; flex: none; }
.panel-tabs .active { background: #fafbfd; }
.panel-body { flex: 1; padding: 6px 4px 0 3px; background: #f7f7fa; border: 1px solid #c5c9d6; border-top: 0; }
.props {
  width: 100%;
  table-layout: fixed;
  border-collapse: separate;
  border-spacing: 0;
  padding-top: 2px;
  border: solid #e1e3ec;
  border-width: 1px 1px 0 0;
}
.props th { height: 14px; padding: 0 0 0 1px; text-align: left; font-weight: 400; border-bottom: 1px solid #e1e3ec; }
.props td { height: 14px; padding: 0 0 0 3px; line-height: 13px; background: #fff; border-bottom: 1px solid #e1e3ec; }
.props td:first-child { padding-left: 8px; border-right: 1px solid #e1e3ec; }
.props td.field { padding: 0; }
.props td, .props th { white-space: nowrap; }
.select { position: relative; }
.select select { appearance: none; display: block; width: 100%; height: 13px; padding: 0 3px; border: 0; background: #fff; }
.select svg { position: absolute; right: 0; top: 0; width: 13px; height: 13px; padding: 2px; background: #e5e5e5; outline: 1px solid #ccc; outline-offset: -1px; pointer-events: none; }
.select path { fill: none; stroke: #444; }
.place { display: block; width: 100%; height: 12px; background: #e1e1e1; border: 1px solid #adadad; line-height: 10px; }
.file { display: flex; justify-content: space-between; }
.file span { padding-left: 1px; }
.file button { width: 12px; height: 13px; background: #e1e1e1; border: 1px solid #bbb; line-height: 10px; }

input[type="checkbox"] {
  appearance: none;
  display: block;
  width: 10px;
  height: 10px;
  margin: 0;
  border: 1px solid #555;
  background: #fff;
}
input[type="checkbox"]:checked::before {
  content: "";
  display: block;
  width: 6px;
  height: 3px;
  margin: 1px;
  border: solid #333;
  border-width: 0 0 1px 1px;
  transform: rotate(-45deg);
}
input[type="checkbox"]:disabled { background: #ddd; border-color: #bbb; }

/* Snap options and status */
.osnap { display: flex; align-items: center; gap: 3px; height: 20px; padding-left: 8px; border-bottom: 1px solid #c3c6d2; }
.osnap label { display: flex; align-items: center; gap: 4px; }
.status { height: 13px; border-bottom: 1px solid #c3c6d2; }

/* Taskbar */
.taskbar { display: flex; height: 29px; background: linear-gradient(90deg, #0d0f0d 26%, #0a0a09 40%, #1a2022 57%, #090909 66%, #050505 78%, #1b2020 90%, #101515); color: #fff; }
.start { width: 34px; display: grid; place-items: center; }
.start svg { width: 12px; height: 12px; }
.search { display: flex; align-items: center; gap: 6px; width: 246px; padding: 0 8px 0 7px; background: #f2f2f2; color: #333; font: 10px/14px "Open Sans", sans-serif; }
.search svg { width: 16px; height: 16px; }
.search .mic { width: 12px; }
.search input { flex: 1; min-width: 0; border: 0; padding: 0; background: none; outline: 0; }
.search input::placeholder { color: #444; opacity: 1; }
.apps { display: grid; grid-template-columns: repeat(10, 1fr); width: 356px; }
.apps button { display: grid; place-items: center; }
.apps svg { width: 17px; height: 17px; }
.running { background: #3d4143; border-bottom: 2px solid #76b9ed; }
.tray { display: flex; align-items: center; gap: 6px; margin-left: auto; padding-right: 17px; }
.tray svg { width: 12px; height: 12px; }
.tray .big { width: 17px; height: 17px; margin-right: 9px; }
.tray .people { width: 14px; height: 14px; margin-right: 6px; }
.tray .note { width: 14px; height: 14px; }
.tray time { margin: 0 6px 0 0; text-align: center; font: 8px/13px "Open Sans", sans-serif; }
```
